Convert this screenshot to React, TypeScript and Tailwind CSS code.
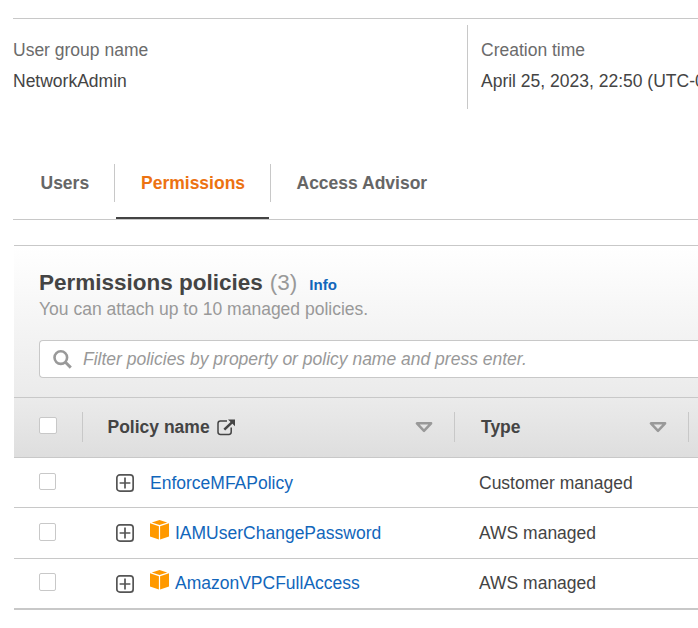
import React from "react";

function Checkbox({ className = "" }: { className?: string }) {
  return <span className={`block shrink-0 rounded-[2px] border border-[#c8c8c8] bg-white ${className}`} />;
}

function SortIcon() {
  return (
    <svg width="18" height="11" viewBox="0 0 18 11" className="block shrink-0">
      <path d="M1.9 1.3h14.2L9 8.8z" fill="none" stroke="#999" strokeWidth="2.5" strokeLinejoin="round" />
    </svg>
  );
}

function ExternalIcon() {
  return (
    <svg width="19" height="17" viewBox="0 0 19 17" className="block shrink-0" fill="none" stroke="#444" strokeWidth="1.5">
      <path d="M10 2H3.4Q1 2 1 4.4v8.7q0 2.4 2.4 2.4h8.4q2.4 0 2.4-2.4V8.4" />
      <path d="M7.3 10.6 15 3.4" strokeWidth="2.6" />
      <path d="M11 .4H18v6.8z" fill="#444" stroke="none" />
    </svg>
  );
}

function ExpandIcon() {
  return (
    <svg width="18" height="18" viewBox="0 0 18 18" className="block shrink-0" fill="none" stroke="#555" strokeWidth="1.7">
      <rect x="0.85" y="0.85" width="16.3" height="16.3" rx="3" />
      <path d="M9 3.6v10.8M3.6 9h10.8" />
    </svg>
  );
}

function BoxIcon({ className = "" }: { className?: string }) {
  return (
    <svg width="19" height="20" viewBox="0 0 19 20" className={`mr-[6px] block shrink-0 ${className}`} fill="#ff9900">
      <path d="M9.5 0 17.2 2.5 9.5 4.9 1.8 2.5z" />
      <path d="M0 3.2 8.9 6.2V19.4L0 16.4z" />
      <path d="M19 3.2 10.1 6.2V19.4L19 16.4z" />
    </svg>
  );
}

const rows = [
  { name: "EnforceMFAPolicy", type: "Customer managed", aws: false, row: "h-[50px] border-b", box: "mt-[15px] h-[17px]", icon: "", text: "mt-[15px]" },
  { name: "IAMUserChangePassword", type: "AWS managed", aws: true, row: "h-[51px] border-b", box: "mt-[15px] h-[18px]", icon: "mt-[12px]", text: "mt-[15px]" },
  { name: "AmazonVPCFullAccess", type: "AWS managed", aws: true, row: "h-[51px] border-b-2", box: "mt-[14px] h-[18px]", icon: "mt-[11px]", text: "mt-[14px]" },
];

export default function App() {
  return (
    <div className="h-[628px] w-[698px] overflow-hidden bg-white pt-[18px] font-['Liberation_Sans',Arial,sans-serif] text-[17.5px] leading-[20px] whitespace-nowrap text-[#444]">
      <section className="ml-[13px] flex h-[91px] border-t border-[#c8c8c8] pt-[6px]">
        <div className="w-[454px] shrink-0 pt-[15px]">
          <div className="text-[#6b6b6b]">User group name</div>
          <div className="mt-[11px]">NetworkAdmin</div>
        </div>
        <div className="w-[231px] shrink-0 overflow-hidden border-l border-[#c8c8c8] pt-[15px] pl-[13px]">
          <div className="text-[#6b6b6b]">Creation time</div>
          <div className="mt-[11px]">April 25, 2023, 22:50 (UTC-0</div>
        </div>
      </section>

      <nav className="mt-[55px] ml-[13px] flex h-[56px] border-b border-[#c8c8c8] font-bold text-[#666]">
        <div className="h-[38px] w-[102px] border-r border-[#c8c8c8] pt-[9px] pl-[27.5px]">Users</div>
        <div className="ml-px h-[55px] w-[153px] border-b-2 border-[#444] pt-[9px] pl-[25px] text-[#ec7211]">Permissions</div>
        <div className="ml-px h-[38px] border-l border-[#c8c8c8] pt-[9px] pl-[25.5px]">Access Advisor</div>
      </nav>

      <section className="mt-[25px] ml-[14px]">
        <div className="h-[152px] border-t border-[#c8c8c8] bg-linear-to-b from-white to-[#ebebeb] pt-[24px] pl-[25px]">
          <div className="flex h-[26px] items-baseline">
            <h2 className="text-[22.5px] leading-[26px] font-bold">Permissions policies</h2>
            <span className="ml-[7px] text-[22.5px] leading-[26px] text-[#999]">(3)</span>
            <a className="ml-[12px] text-[15px] leading-[20px] font-bold text-[#1166bb]">Info</a>
          </div>
          <p className="mt-[3px] text-[#999]">You can attach up to 10 managed policies.</p>
          <div className="mt-[21px] flex h-[38px] items-center rounded-l-[4px] border border-r-0 border-[#c8c8c8] bg-white pl-[13px] text-[#999] italic">
            <svg width="19" height="19" viewBox="0 0 19 19" className="mr-[11px] block" fill="none" stroke="#999" strokeWidth="2.6">
              <circle cx="7.8" cy="7.6" r="6.3" />
              <path d="m12.2 12 5.6 5.6" strokeWidth="2.9" />
            </svg>
            Filter policies by property or policy name and press enter.
          </div>
        </div>

        <div className="flex h-[61px] border-y border-[#c8c8c8] bg-linear-to-b from-[#ebebeb] to-[#dedede] font-bold">
          <div className="w-[68px] shrink-0 pt-[19px] pl-[25px]">
            <Checkbox className="h-[17px] w-[18px]" />
          </div>
          <div className="mt-[14px] flex h-[30px] w-[372px] shrink-0 items-center border-l border-[#c8c8c8] pl-[24.5px]">
            Policy name
            <span className="ml-[7px]"><ExternalIcon /></span>
            <span className="mr-[21px] ml-auto"><SortIcon /></span>
          </div>
          <div className="mt-[14px] flex h-[30px] w-[234px] shrink-0 items-center border-l border-[#c8c8c8] pl-[26px]">
            Type
            <span className="mr-[21px] ml-auto"><SortIcon /></span>
          </div>
          <div className="mt-[14px] h-[30px] border-l border-[#c8c8c8]" />
        </div>

        {rows.map((r) => (
          <div key={r.name} className={`flex border-[#c8c8c8] ${r.row}`}>
            <div className="w-[102px] shrink-0 pl-[25px]">
              <Checkbox className={`w-[17px] ${r.box}`} />
            </div>
            <div className="mt-[16px] w-[34px] shrink-0"><ExpandIcon /></div>
            <div className="flex w-[329px] shrink-0 text-[#1166bb]">
              {r.aws && <BoxIcon className={r.icon} />}
              <a className={r.text}>{r.name}</a>
            </div>
            <div className={r.text}>{r.type}</div>
          </div>
        ))}
      </section>
    </div>
  );
}
